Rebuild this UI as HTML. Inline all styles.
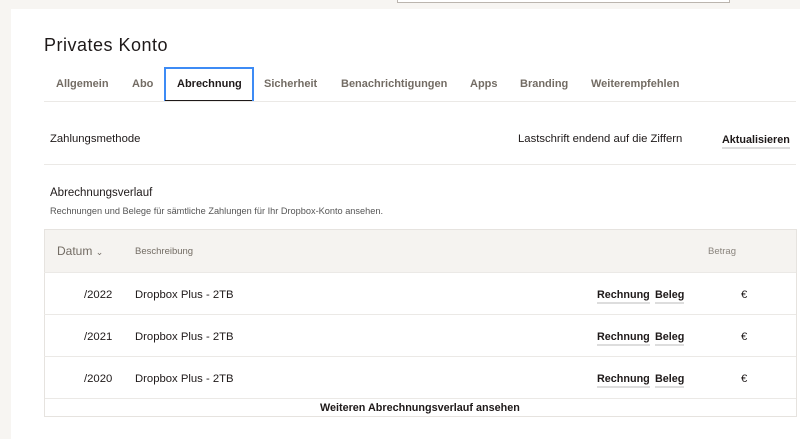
<!DOCTYPE html>
<html><head><meta charset="utf-8"><style>
*{margin:0;padding:0;box-sizing:border-box}
body{width:800px;height:439px;background:#f7f5f2;font-family:"Liberation Sans",sans-serif;position:relative;overflow:hidden;color:#1e1919}
.main{position:absolute;left:11px;top:9px;right:0;bottom:0;background:#fff}
.a{position:absolute;white-space:nowrap}
.tab{position:absolute;top:78px;font-size:11px;font-weight:bold;color:#736c64}
.link{border-bottom:2px solid #ddd;font-weight:bold;font-size:10.8px;color:#1e1919;padding-bottom:1px}
.row{position:absolute;left:44px;width:752px;height:42px;border-top:1px solid #ebe9e6;font-size:11.3px}
.row>span{top:16px}
</style></head><body>
<div class="a" style="left:397px;top:-1px;width:333px;height:4px;border:1px solid #bbb5ae;border-top:none;background:#fff"></div>
<div class="main"></div>
<div class="a" style="left:44px;top:35px;font-size:18px;letter-spacing:0.5px">Privates Konto</div>
<div class="tab" style="left:56px">Allgemein</div>
<div class="tab" style="left:132px">Abo</div>
<div class="a" style="left:164px;top:67px;width:90px;height:35px;border:2px solid #3d8bf5"></div>
<div class="a" style="left:165px;top:100px;width:87px;height:2px;background:#1e1919"></div>
<div class="tab" style="left:177px;color:#1e1919">Abrechnung</div>
<div class="tab" style="left:264px">Sicherheit</div>
<div class="tab" style="left:341px">Benachrichtigungen</div>
<div class="tab" style="left:470px">Apps</div>
<div class="tab" style="left:520px">Branding</div>
<div class="tab" style="left:591px">Weiterempfehlen</div>
<div class="a" style="left:44px;top:101px;width:752px;height:1px;background:#ebe9e6"></div>
<div class="a" style="left:50px;top:133px;font-size:11.3px">Zahlungsmethode</div>
<div class="a" style="left:518px;top:133px;font-size:11.3px">Lastschrift endend auf die Ziffern</div>
<div class="a" style="left:722px;top:130px"><span class="link">Aktualisieren</span></div>
<div class="a" style="left:44px;top:164px;width:752px;height:1px;background:#ebe9e6"></div>
<div class="a" style="left:50px;top:187px;font-size:11.5px">Abrechnungsverlauf</div>
<div class="a" style="left:50px;top:206px;font-size:9.2px;color:#555">Rechnungen und Belege für sämtliche Zahlungen für Ihr Dropbox-Konto ansehen.</div>
<div class="a" style="left:44px;top:229px;width:753px;height:188px;border:1px solid #e6e3df"></div>
<div class="a" style="left:45px;top:230px;width:751px;height:42px;background:#f5f3f0"></div>
<div class="a" style="left:57px;top:244px;font-size:12px;color:#736c64">Datum <span style="font-size:9px">&#8964;</span></div>
<div class="a" style="left:135px;top:246px;font-size:9.5px;color:#736c64">Beschreibung</div>
<div class="a" style="left:708px;top:246px;font-size:9.5px;color:#8a847d">Betrag</div>
<div class="row" style="top:272px"><span class="a" style="left:40px">/2022</span><span class="a" style="left:91px">Dropbox Plus - 2TB</span><span class="a" style="left:553px"><span class="link">Rechnung</span></span><span class="a" style="left:611px"><span class="link">Beleg</span></span><span class="a" style="left:697px">€</span></div>
<div class="row" style="top:314px"><span class="a" style="left:40px">/2021</span><span class="a" style="left:91px">Dropbox Plus - 2TB</span><span class="a" style="left:553px"><span class="link">Rechnung</span></span><span class="a" style="left:611px"><span class="link">Beleg</span></span><span class="a" style="left:697px">€</span></div>
<div class="row" style="top:356px"><span class="a" style="left:40px">/2020</span><span class="a" style="left:91px">Dropbox Plus - 2TB</span><span class="a" style="left:553px"><span class="link">Rechnung</span></span><span class="a" style="left:611px"><span class="link">Beleg</span></span><span class="a" style="left:697px">€</span></div>
<div class="a" style="left:45px;top:398px;width:751px;height:1px;background:#ebe9e6"></div>
<div class="a" style="left:320px;top:402px;font-size:10.8px;font-weight:bold">Weiteren Abrechnungsverlauf ansehen</div>
</body></html>
